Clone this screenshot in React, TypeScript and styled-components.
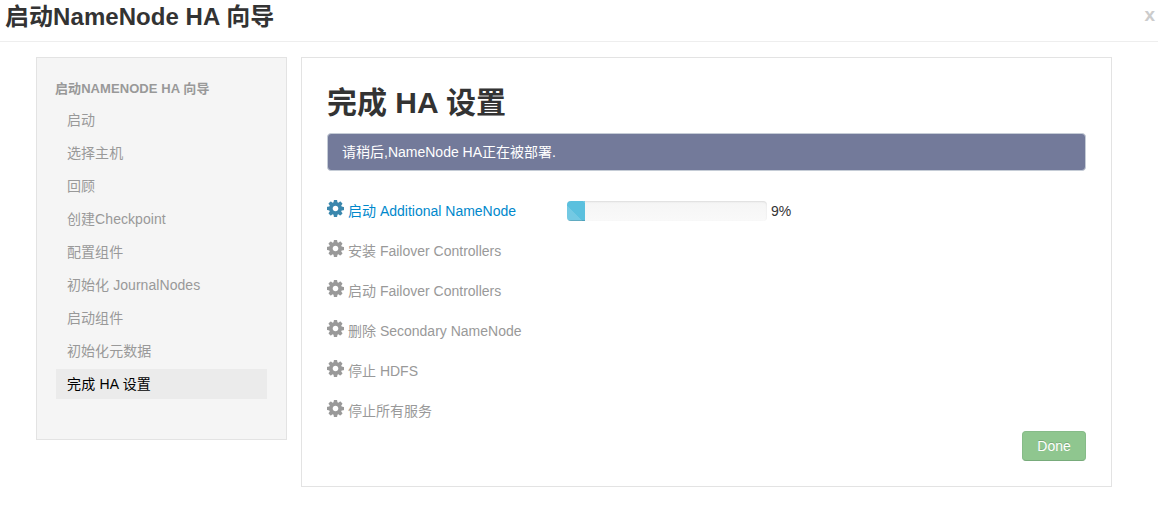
import React from "react";
import styled, { createGlobalStyle } from "styled-components";

const GlobalStyle = createGlobalStyle`
  *, *::before, *::after { box-sizing: border-box; }
  body {
    margin: 0;
    background: #fff;
    color: #333;
    font: 14px/20px "Liberation Sans", "Noto Sans CJK SC", sans-serif;
  }
`;

const Header = styled.header`
  display: flex;
  justify-content: space-between;
  height: 42px;
  padding: 2px 3px 0 5px;
  border-bottom: 1px solid #eee;
`;

const WizardTitle = styled.h3`
  margin: 0;
  font-size: 24px;
  line-height: 30px;
  letter-spacing: 0.05px;
`;

const Close = styled.button`
  height: 26px;
  padding: 0;
  border: 0;
  background: none;
  color: #ccc;
  font: bold 19px/26px "Liberation Sans", sans-serif;
`;

const Body = styled.div`
  display: flex;
  align-items: flex-start;
  gap: 14px;
  padding: 15px 46px 0 36px;
`;

const Sidebar = styled.nav`
  width: 251px;
  height: 383px;
  padding: 21px 19px 0;
  border: 1px solid #e3e3e3;
  background: #f5f5f5;
`;

const NavHeader = styled.div`
  height: 20px;
  margin: 0 0 6px -1px;
  color: #999;
  font-size: 13px;
  font-weight: bold;
  letter-spacing: 0.07px;
  text-transform: uppercase;
`;

const NavList = styled.ul`
  display: flex;
  flex-direction: column;
  gap: 3px;
  margin: 0;
  padding: 0;
  list-style: none;
`;

const NavItem = styled.li<{ $active: boolean }>`
  height: 30px;
  padding: 5px 11px;
  background: ${(p) => (p.$active ? "#ebebeb" : "transparent")};
  color: ${(p) => (p.$active ? "#000" : "#999")};
  letter-spacing: ${(p) => (p.$active ? "0.2px" : "0.06px")};
`;

const Main = styled.main`
  flex: 1;
  height: 430px;
  padding: 25px;
  border: 1px solid #e3e3e3;
`;

const StepTitle = styled.h2`
  height: 40px;
  margin: 0 0 10px;
  font-size: 30px;
  line-height: 40px;
`;

const Notice = styled.div`
  height: 38px;
  padding: 8px 14px;
  border: 1px solid #c5ccd6;
  border-radius: 4px;
  background: #737a9a;
  color: #fff;
`;

const Tasks = styled.div`
  margin-top: 20px;
`;

const Task = styled.div<{ $running: boolean }>`
  display: flex;
  height: 40px;
  padding-top: 10px;
  color: ${(p) => (p.$running ? "#0088cc" : "#999")};
`;

const TaskName = styled.div`
  display: flex;
  width: 240px;
  gap: 4px;
`;

const Gear = styled.svg<{ $running: boolean }>`
  width: 17px;
  height: 17px;
  margin-top: -1px;
  fill: ${(p) => (p.$running ? "#3a87ad" : "#999")};
`;

const Track = styled.div`
  width: 200px;
  height: 20px;
  margin-right: 4px;
  overflow: hidden;
  border-radius: 4px;
  background: linear-gradient(#f5f5f5, #f9f9f9);
  box-shadow: inset 0 1px 2px rgba(0, 0, 0, 0.1);
`;

const Bar = styled.div`
  height: 20px;
  background: #5bc0de linear-gradient(45deg, rgba(255, 255, 255, 0.15) 25%, transparent 25%, transparent 50%, rgba(255, 255, 255, 0.15) 50%, rgba(255, 255, 255, 0.15) 75%, transparent 75%);
  background-size: 40px 40px;
  background-position: -5px 20px;
  box-shadow: inset 0 -1px 0 rgba(0, 0, 0, 0.15);
`;

const Percent = styled.span`
  color: #333;
`;

const Footer = styled.footer`
  display: flex;
  justify-content: flex-end;
`;

const DoneButton = styled.button`
  width: 64px;
  height: 30px;
  padding: 0;
  border: 1px solid #86bb88;
  border-bottom-color: #78ab7b;
  border-radius: 4px;
  background: #8fc68f;
  color: #fff;
  font: 14px/20px "Liberation Sans", sans-serif;
  text-shadow: 0 -1px 0 rgba(0, 0, 0, 0.17);
`;

const steps = ["启动", "选择主机", "回顾", "创建Checkpoint", "配置组件", "初始化 JournalNodes", "启动组件", "初始化元数据", "完成 HA 设置"];
const activeStep = 8;

const tasks: { name: string; progress?: number }[] = [
  { name: "启动 Additional NameNode", progress: 9 },
  { name: "安装 Failover Controllers" },
  { name: "启动 Failover Controllers" },
  { name: "删除 Secondary NameNode" },
  { name: "停止 HDFS" },
  { name: "停止所有服务" },
];

function Cog({ running }: { running: boolean }) {
  return (
    <Gear $running={running} viewBox="0 0 1536 1536" aria-hidden="true">
      <path d="M1024 768q0-106-75-181t-181-75-181 75-75 181 75 181 181 75 181-75 75-181zm512-109v222q0 12-8 23t-20 13l-185 28q-19 54-39 91 35 50 107 138 10 12 10 25t-9 23q-27 37-99 108t-94 71q-12 0-26-9l-138-108q-44 23-91 38-16 136-29 186-7 28-36 28h-222q-14 0-24.5-8.5t-11.5-21.5l-28-184q-49-16-90-37l-141 107q-10 9-25 9-14 0-25-11-126-114-165-168-7-10-7-23 0-12 8-23 15-21 51-66.5t54-70.5q-27-50-41-99l-183-27q-13-2-21-12.5t-8-23.5v-222q0-12 8-23t19-13l186-28q14-46 39-92-40-57-107-138-10-12-10-24 0-10 9-23 26-36 98.5-107.5t94.5-71.5q13 0 26 10l138 107q44-23 91-38 16-136 29-186 7-28 36-28h222q14 0 24.5 8.5t11.5 21.5l28 184q49 16 90 37l142-107q9-9 24-9 13 0 25 10 129 119 165 170 7 8 7 22 0 12-8 23-15 21-51 66.5t-54 70.5q26 50 41 98l183 28q13 2 21 12.5t8 23.5z" />
    </Gear>
  );
}

export default function App() {
  return (
    <>
      <GlobalStyle />
      <Header>
        <WizardTitle>启动NameNode HA 向导</WizardTitle>
        <Close>x</Close>
      </Header>
      <Body>
        <Sidebar>
          <NavHeader>启动NameNode HA 向导</NavHeader>
          <NavList>
            {steps.map((step, i) => (
              <NavItem key={step} $active={i === activeStep}>{step}</NavItem>
            ))}
          </NavList>
        </Sidebar>
        <Main>
          <StepTitle>完成 HA 设置</StepTitle>
          <Notice>请稍后,NameNode HA正在被部署.</Notice>
          <Tasks>
            {tasks.map(({ name, progress }) => {
              const running = progress !== undefined;
              return (
                <Task key={name} $running={running}>
                  <TaskName>
                    <Cog running={running} />
                    <span>{name}</span>
                  </TaskName>
                  {running && (
                    <>
                      <Track>
                        <Bar style={{ width: `${progress}%` }} />
                      </Track>
                      <Percent>{progress}%</Percent>
                    </>
                  )}
                </Task>
              );
            })}
          </Tasks>
          <Footer>
            <DoneButton>Done</DoneButton>
          </Footer>
        </Main>
      </Body>
    </>
  );
}
